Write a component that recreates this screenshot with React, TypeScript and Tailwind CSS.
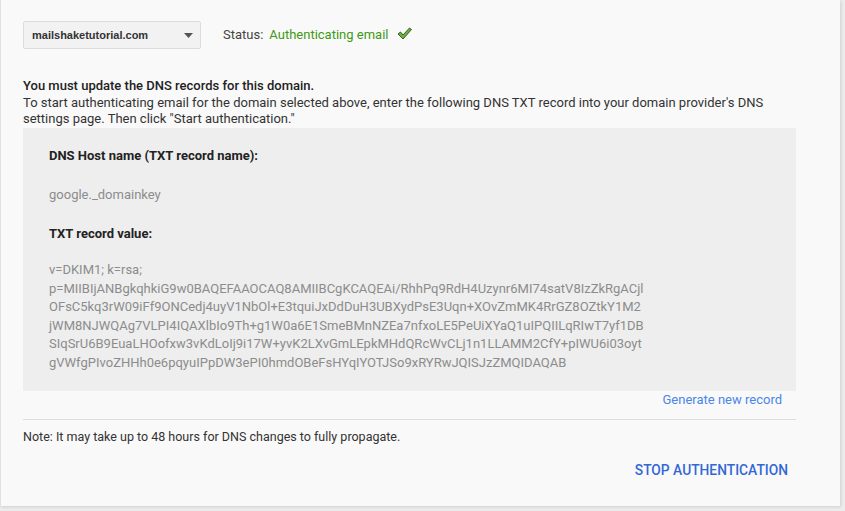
const keyLines = [
  'v=DKIM1; k=rsa;',
  'p=MIIBIjANBgkqhkiG9w0BAQEFAAOCAQ8AMIIBCgKCAQEAi/RhhPq9RdH4Uzynr6MI74satV8IzZkRgACjl',
  'OFsC5kq3rW09iFf9ONCedj4uyV1NbOl+E3tquiJxDdDuH3UBXydPsE3Uqn+XOvZmMK4RrGZ8OZtkY1M2',
  'jWM8NJWQAg7VLPI4IQAXlbIo9Th+g1W0a6E1SmeBMnNZEa7nfxoLE5PeUiXYaQ1uIPQIILqRIwT7yf1DB',
  'SIqSrU6B9EuaLHOofxw3vKdLoIj9i17W+yvK2LXvGmLEpkMHdQRcWvCLj1n1LLAMM2CfY+pIWU6i03oyt',
  'gVWfgPIvoZHHh0e6pqyuIPpDW3ePI0hmdOBeFsHYqIYOTJSo9xRYRwJQISJzZMQIDAQAB',
]

export default function App() {
  return (
    <div className="w-[845px] h-[511px] bg-[#ececec] font-['Roboto','Liberation_Sans',sans-serif] text-[13px] text-[#333]">
      <div className="w-[840px] h-[506px] bg-[#f9f9f9] border-l border-[#e2e2e2] shadow-[1px_1px_3px_rgba(0,0,0,0.12)] pl-[22px] pr-[44px] pt-[21px]">
        {/* domain + status */}
        <div className="flex items-center h-[28px]">
          <div className="w-[178px] h-[28px] bg-[#f2f2f2] border border-[#dcdcdc] rounded-[2px] flex items-center justify-between pl-[8px] pr-[7px]">
            <span className="font-['Liberation_Sans',sans-serif] font-bold text-[11px] text-[#333]">mailshaketutorial.com</span>
            <svg width="9" height="5" viewBox="0 0 9 5"><path d="M0 0 L9 0 L4.5 5 Z" fill="#555" /></svg>
          </div>
          <span className="ml-[22px] text-[#444]">Status:</span>
          <span className="ml-[6px] text-[#3e9a14]">Authenticating email</span>
          <svg className="ml-[8px] -mt-[4px]" width="15" height="13" viewBox="0 0 15 13">
            <path d="M1 7 L3.5 5 L6 8 L12.5 1 L14.5 2.5 L6 12 Z" fill="#6ab43e" stroke="#3a5a2a" strokeWidth="1" strokeLinejoin="round" />
          </svg>
        </div>

        {/* intro */}
        <div className="mt-[29px] leading-[16.5px]">
          <p className="font-medium text-[#222]">You must update the DNS records for this domain.</p>
          <p>To start authenticating email for the domain selected above, enter the following DNS TXT record into your domain provider's DNS settings page. Then click "Start authentication."</p>
        </div>

        {/* record box */}
        <div className="w-[773px] h-[263px] bg-[#eeeeee] pl-[26px] pt-[18px]">
          <p className="font-bold text-[#222]">DNS Host name (TXT record name):</p>
          <p className="mt-[20px] text-[#8c8c8c]">google._domainkey</p>
          <p className="mt-[19px] font-bold text-[#222]">TXT record value:</p>
          <div className="mt-[18px] text-[#8c8c8c] leading-[18.6px]">
            {keyLines.map((l) => (
              <div key={l}>{l}</div>
            ))}
          </div>
        </div>

        <div className="w-[773px] h-[28px] flex justify-end items-start pr-[14px] pt-[1px]">
          <span className="text-[#4a86e8] leading-[16px]">Generate new record</span>
        </div>
        <div className="w-[773px] border-t border-[#dddddd]" />

        <p className="mt-[8px] text-[12.5px] text-[#333]">Note: It may take up to 48 hours for DNS changes to fully propagate.</p>

        <div className="w-[765px] flex justify-end mt-[14px]">
          <span className="font-medium text-[#3367d6] text-[13.8px]">STOP AUTHENTICATION</span>
        </div>
      </div>
    </div>
  )
}
